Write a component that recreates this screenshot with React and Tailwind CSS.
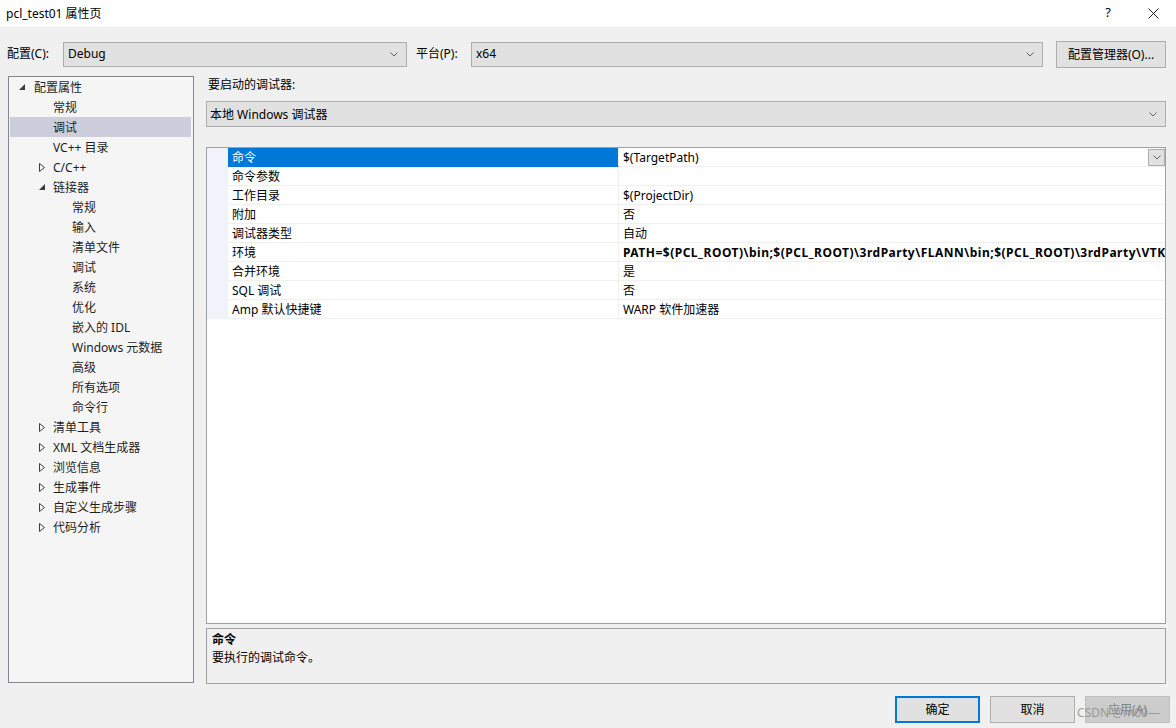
import React from 'react';

const font = { fontFamily: "'Noto Sans', 'Noto Sans CJK SC', sans-serif" };

const Chevron = ({ className = '' }) => (
    <svg className={className} width="8" height="5" viewBox="0 0 8 5" fill="none">
        <path d="M0.5 0.5 L4 4 L7.5 0.5" stroke="#606060" strokeWidth="1" />
    </svg>
);

const Expanded = () => (
    <svg width="6" height="6" viewBox="0 0 6 6">
        <path d="M6 0 L6 6 L0 6 Z" fill="#3c3c3c" />
    </svg>
);

const Collapsed = () => (
    <svg width="6" height="9" viewBox="0 0 6 9">
        <path d="M0.5 0.5 L5.5 4.5 L0.5 8.5 Z" fill="none" stroke="#3c3c3c" strokeWidth="1" />
    </svg>
);

const tree = [
    { level: 0, label: '配置属性', arrow: 'open' },
    { level: 1, label: '常规' },
    { level: 1, label: '调试', selected: true },
    { level: 1, label: 'VC++ 目录' },
    { level: 1, label: 'C/C++', arrow: 'closed' },
    { level: 1, label: '链接器', arrow: 'open' },
    { level: 2, label: '常规' },
    { level: 2, label: '输入' },
    { level: 2, label: '清单文件' },
    { level: 2, label: '调试' },
    { level: 2, label: '系统' },
    { level: 2, label: '优化' },
    { level: 2, label: '嵌入的 IDL' },
    { level: 2, label: 'Windows 元数据' },
    { level: 2, label: '高级' },
    { level: 2, label: '所有选项' },
    { level: 2, label: '命令行' },
    { level: 1, label: '清单工具', arrow: 'closed' },
    { level: 1, label: 'XML 文档生成器', arrow: 'closed' },
    { level: 1, label: '浏览信息', arrow: 'closed' },
    { level: 1, label: '生成事件', arrow: 'closed' },
    { level: 1, label: '自定义生成步骤', arrow: 'closed' },
    { level: 1, label: '代码分析', arrow: 'closed' },
];

const props = [
    { name: '命令', value: '$(TargetPath)', selected: true },
    { name: '命令参数', value: '' },
    { name: '工作目录', value: '$(ProjectDir)' },
    { name: '附加', value: '否' },
    { name: '调试器类型', value: '自动' },
    { name: '环境', value: 'PATH=$(PCL_ROOT)\\bin;$(PCL_ROOT)\\3rdParty\\FLANN\\bin;$(PCL_ROOT)\\3rdParty\\VTK\\bin;$(PCL_ROOT)\\3rdParty\\Qhull\\bin', bold: true },
    { name: '合并环境', value: '是' },
    { name: 'SQL 调试', value: '否' },
    { name: 'Amp 默认快捷键', value: 'WARP 软件加速器' },
];

const levelPad = ['pl-[9px]', 'pl-[29px]', 'pl-[62px]'];

const TreeRow = ({ item }) => (
    <div className={`h-[20px] flex items-center pt-[2px] ml-[1px] mr-[2px] ${levelPad[item.level]} ${item.selected ? 'bg-[#cccedb]' : ''}`}>
        {item.arrow && (
            <span className={`flex items-center mt-[-2px] ${item.level === 0 ? 'w-[15px]' : 'w-[14px]'}`}>
                {item.arrow === 'open' ? <Expanded /> : <Collapsed />}
            </span>
        )}
        {!item.arrow && item.level === 1 && <span className="w-[14px]" />}
        <span className="whitespace-nowrap">{item.label}</span>
    </div>
);

const PropRow = ({ p }) => (
    <div className="flex h-[19px]">
        <div className="w-[21px] bg-[#f0f4fa]" />
        <div className={`w-[391px] flex items-center pl-[4px] pt-[2px] border-b border-r border-[#f0f0f0] ${p.selected ? 'bg-[#0078d7] text-white border-b-[#0078d7]' : ''}`}>
            {p.name}
        </div>
        <div className="flex-1 min-w-0 flex items-center pl-[4px] pt-[2px] border-b border-[#f0f0f0] relative overflow-hidden">
            <span className={`whitespace-nowrap ${p.bold ? 'font-bold tracking-[0.5px]' : ''}`}>{p.value}</span>
            {p.selected && (
                <span className="absolute right-0 top-[1px] w-[17px] h-[17px] bg-[#e1e1e1] border border-[#adadad] flex items-center justify-center">
                    <Chevron />
                </span>
            )}
        </div>
    </div>
);

export default function App() {
    return (
        <div className="w-[1176px] h-[728px] bg-[#f0f0f0] flex flex-col text-[12px] text-black overflow-hidden" style={font}>
            {/* Title bar */}
            <div className="h-[27px] bg-white flex items-center justify-between pl-[6px]">
                <span className="text-[12px]">pcl_test01 属性页</span>
                <div className="flex items-center h-full">
                    <span className="w-[44px] text-center text-[13px] mt-[-2px] ml-[2px]">?</span>
                    <span className="w-[46px] flex justify-center">
                        <svg width="11" height="11" viewBox="0 0 11 11">
                            <path d="M0.5 0.5 L10.5 10.5 M10.5 0.5 L0.5 10.5" stroke="#222" strokeWidth="1" />
                        </svg>
                    </span>
                </div>
            </div>

            {/* Config row */}
            <div className="mt-[14px] flex items-center pl-[7px] h-[27px]">
                <span className="w-[56px] mt-[-1px]">配置(C):</span>
                <div className="w-[344px] h-[25px] bg-[#e1e1e1] border border-[#adadad] flex items-center justify-between pl-[4px] pr-[8px]">
                    <span className="mt-[-1px]">Debug</span>
                    <Chevron />
                </div>
                <span className="w-[55px] ml-[9px] mt-[-1px]">平台(P):</span>
                <div className="w-[572px] h-[25px] bg-[#e1e1e1] border border-[#adadad] flex items-center justify-between pl-[4px] pr-[8px]">
                    <span className="mt-[-1px]">x64</span>
                    <Chevron />
                </div>
                <button className="ml-[13px] w-[110px] h-[27px] bg-[#e1e1e1] border border-[#adadad] flex items-center justify-center">
                    配置管理器(O)...
                </button>
            </div>

            {/* Main area */}
            <div className="mt-[8px] flex pl-[8px]">
                <div className="w-[186px] h-[607px] bg-[#f5f5f5] border border-[#828790] text-[#1e1e1e]">
                    {tree.map((item, i) => (
                        <TreeRow key={i} item={item} />
                    ))}
                </div>

                <div className="ml-[12px] w-[960px] flex flex-col">
                    <div className="h-[25px] leading-[16px] pl-[2px] pt-[1px]">要启动的调试器:</div>
                    <div className="h-[26px] bg-[#e1e1e1] border border-[#adadad] flex items-center justify-between pl-[3px] pr-[8px]">
                        <span className="mt-[1px]">本地 Windows 调试器</span>
                        <Chevron />
                    </div>

                    <div className="mt-[20px] h-[477px] bg-white border border-[#a0a0a0] flex flex-col">
                        {props.map((p, i) => (
                            <PropRow key={i} p={p} />
                        ))}
                    </div>

                    <div className="mt-[4px] h-[56px] bg-[#f0f0f0] border border-[#a0a0a0] px-[5px] pt-[2px]">
                        <div className="font-bold leading-[17px]">命令</div>
                        <div className="leading-[19px]">要执行的调试命令。</div>
                    </div>
                </div>
            </div>

            {/* Buttons */}
            <div className="mt-[12px] flex justify-end gap-[10px] pr-[6px] relative">
                <button className="w-[85px] h-[27px] bg-[#e1e1e1] border-2 border-[#0078d7]">确定</button>
                <button className="w-[85px] h-[27px] bg-[#e1e1e1] border border-[#adadad]">取消</button>
                <button className="w-[85px] h-[27px] bg-[#cccccc] border border-[#bfbfbf] text-[#838383]">应用(A)</button>
                <span className="absolute right-[16px] top-[8px] text-[12px] text-[#8c8c8c] opacity-80 pointer-events-none">CSDN @m00—</span>
            </div>
        </div>
    );
}
